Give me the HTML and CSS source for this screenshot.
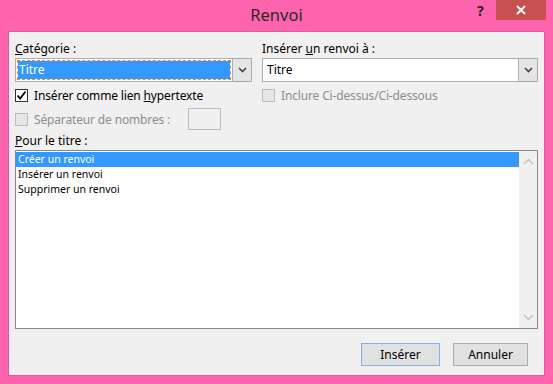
FILE: index.html
```html
<!DOCTYPE html>
<html lang="fr">

<head>
    <meta charset="UTF-8">
    <meta name="viewport" content="width=device-width, initial-scale=1.0">
    <title>Renvoi</title>
    <link rel="stylesheet" href="styles.css">
</head>

<body>
    <div class="window">
        <div class="titlebar">
            <span class="title">Renvoi</span>
            <span class="help">?</span>
            <span class="close">
                <svg width="10" height="10" viewBox="0 0 10 10">
                    <path d="M1 1 L9 9 M9 1 L1 9" stroke="#fff" stroke-width="2" />
                </svg>
            </span>
        </div>

        <div class="content">
            <div class="top">
                <div class="col left">
                    <label class="label"><u>C</u>atégorie :</label>
                    <div class="combo">
                        <div class="combo-value"><span class="selected">Titre</span></div>
                        <div class="combo-btn">
                            <svg width="9" height="6" viewBox="0 0 9 6">
                                <path d="M1 1 L4.5 4.5 L8 1" fill="none" stroke="#444" stroke-width="1.6" />
                            </svg>
                        </div>
                    </div>
                    <div class="check-row">
                        <span class="box">
                            <svg width="11" height="11" viewBox="0 0 11 11">
                                <path d="M1.5 5.5 L4.2 8.5 L9.5 1.5" fill="none" stroke="#000" stroke-width="1.8" />
                            </svg>
                        </span>
                        <span>Insérer comme lien <u>h</u>ypertexte</span>
                    </div>
                    <div class="check-row sep disabled">
                        <span class="box"></span>
                        <span>Séparateur de nombres :</span>
                        <span class="small-input"></span>
                    </div>
                </div>

                <div class="col right">
                    <label class="label">Insérer <u>u</u>n renvoi à :</label>
                    <div class="combo">
                        <div class="combo-value">Titre</div>
                        <div class="combo-btn">
                            <svg width="9" height="6" viewBox="0 0 9 6">
                                <path d="M1 1 L4.5 4.5 L8 1" fill="none" stroke="#444" stroke-width="1.6" />
                            </svg>
                        </div>
                    </div>
                    <div class="check-row disabled">
                        <span class="box"></span>
                        <span>Inclure Ci-dessus/Ci-dessous</span>
                    </div>
                </div>
            </div>

            <label class="label list-label"><u>P</u>our le titre :</label>
            <div class="listbox">
                <div class="items">
                    <div class="item active">Créer un renvoi</div>
                    <div class="item">Insérer un renvoi</div>
                    <div class="item">Supprimer un renvoi</div>
                </div>
                <div class="scrollbar">
                    <svg width="11" height="7" viewBox="0 0 11 7">
                        <path d="M1 6 L5.5 1.5 L10 6" fill="none" stroke="#c2c2c2" stroke-width="1.5" />
                    </svg>
                    <svg width="11" height="7" viewBox="0 0 11 7">
                        <path d="M1 1 L5.5 5.5 L10 1" fill="none" stroke="#c2c2c2" stroke-width="1.5" />
                    </svg>
                </div>
            </div>

            <div class="buttons">
                <button class="btn default">Insérer</button>
                <button class="btn">Annuler</button>
            </div>
        </div>
    </div>
</body>

</html>
```

FILE: styles.css
```css
* {
    margin: 0;
    padding: 0;
    box-sizing: border-box;
}

body {
    width: 553px;
    height: 384px;
    background: #fe64ad;
    font-family: "Noto Sans", "Liberation Sans", sans-serif;
    font-size: 12px;
    color: #000;
    overflow: hidden;
}

.window {
    padding: 0 8px;
}

.titlebar {
    position: relative;
    height: 31px;
}

.title {
    display: block;
    text-align: center;
    font-size: 16.5px;
    line-height: 29px;
    color: #2b2b2b;
}

.help {
    position: absolute;
    top: 1px;
    left: 469px;
    font-size: 14px;
    font-weight: bold;
    color: #222;
}

.close {
    position: absolute;
    top: 0;
    left: 488px;
    width: 50px;
    height: 20px;
    background: #c75050;
    display: flex;
    align-items: center;
    justify-content: center;
}

.content {
    height: 345px;
    background: #f0f0f0;
    border: 1px solid #e9559b;
    padding: 8px 6px 9px 6px;
    display: flex;
    flex-direction: column;
}

.top {
    display: flex;
    gap: 10px;
}

.col.left {
    width: 237px;
}

.col.right {
    flex: 1;
}

.label {
    display: block;
    height: 18px;
    line-height: 18px;
}

.combo {
    display: flex;
    height: 24px;
    border: 1px solid #acacac;
    background: #fff;
}

.combo-value {
    flex: 1;
    padding: 2px;
    line-height: 18px;
}

.right .combo-value {
    padding-left: 4px;
}

.selected {
    display: block;
    height: 18px;
    background: #3399ff;
    color: #fff;
    padding-left: 1px;
    outline: 1px dashed #e8941c;
}

.combo-btn {
    width: 19px;
    background: #e5e5e5;
    border-left: 1px solid #acacac;
    display: flex;
    align-items: center;
    justify-content: center;
}

.check-row {
    display: flex;
    align-items: center;
    height: 20px;
    margin-top: 3px;
    gap: 6px;
    letter-spacing: -0.15px;
}

.check-row.sep {
    height: 22px;
}

.box {
    width: 13px;
    height: 13px;
    border: 1px solid #333;
    background: #fff;
    display: flex;
    align-items: center;
    justify-content: center;
}

.disabled {
    color: #8d8d8d;
}

.disabled .box {
    border-color: #bcbcbc;
    background: #e6e6e6;
}

.small-input {
    width: 33px;
    height: 22px;
    border: 1px solid #bcbcbc;
    background: #f0f0f0;
    margin-left: 12px;
}

.list-label {
    margin-top: 2px;
}

.listbox {
    display: flex;
    height: 179px;
    border: 1px solid #828790;
    background: #fff;
}

.items {
    flex: 1;
    padding-top: 1px;
    font-size: 10.5px;
}

.item {
    height: 15px;
    line-height: 15px;
    padding-left: 2px;
}

.item.active {
    background: #3399ff;
    color: #fff;
}

.scrollbar {
    width: 18px;
    background: #f0f0f0;
    display: flex;
    flex-direction: column;
    justify-content: space-between;
    align-items: center;
    padding: 7px 0;
}

.buttons {
    display: flex;
    justify-content: flex-end;
    gap: 13px;
    margin-top: 14px;
    padding-right: 10px;
}

.btn {
    width: 75px;
    height: 23px;
    border: 1px solid #adadad;
    background: #e1e1e1;
    font-family: inherit;
    font-size: 12px;
    color: #000;
}

.btn.default {
    width: 79px;
    border-color: #7eb4ea;
}
```
